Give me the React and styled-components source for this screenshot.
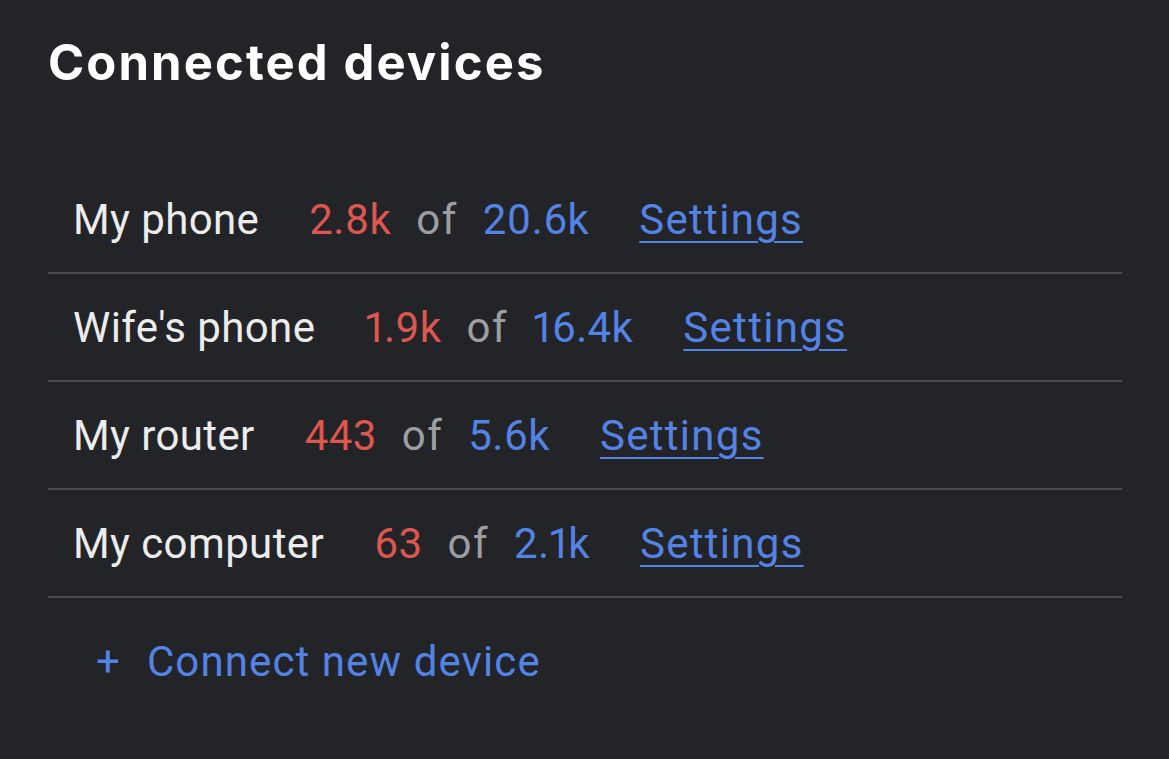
import React from 'react';
import styled, { createGlobalStyle } from 'styled-components';

const Global = createGlobalStyle`
  html, body {
    margin: 0;
    background: #232428;
  }
  body {
    font-family: Roboto, "Noto Sans", sans-serif;
  }
`;

const Panel = styled.div`
  width: 1169px;
  height: 759px;
  box-sizing: border-box;
  padding: 28px 47px 0 48px;
  background: #232428;
`;

const Title = styled.h1`
  margin: 0;
  font-family: Inter, Roboto, sans-serif;
  font-weight: 700;
  font-size: 49px;
  line-height: 70px;
  color: #ffffff;
  letter-spacing: 2.1px;
`;

const List = styled.ul`
  list-style: none;
  margin: 68px 0 0;
  padding: 0;
`;

const Row = styled.li`
  display: flex;
  align-items: center;
  height: 106px;
  padding-left: 25px;
  border-bottom: 2px solid #4a4b4f;
  font-size: 42px;
  letter-spacing: 0.4px;
  font-variant-numeric: proportional-nums;
`;

const Name = styled.span`
  color: #ececed;
  margin-right: 50px;
`;

const Count = styled.span`
  color: ${p => (p.used ? '#dd5650' : '#5383e4')};
`;

const Of = styled.span`
  color: #9d9ea1;
  margin: 0 25px;
  letter-spacing: 1.5px;
`;

const SettingsLink = styled.a`
  color: #5383e4;
  margin-left: 50px;
  letter-spacing: 1.3px;
  text-decoration: underline;
  text-underline-offset: 7px;
  text-decoration-thickness: 2px;
  cursor: pointer;
`;

const AddButton = styled.button`
  display: flex;
  align-items: center;
  gap: 26px;
  margin-top: 20px;
  padding: 0 0 0 48px;
  height: 86px;
  border: none;
  background: none;
  color: #5383e4;
  font-family: Roboto, sans-serif;
  font-size: 42px;
  letter-spacing: 1.1px;
  cursor: pointer;
`;

const devices = [
  { name: 'My phone', used: '2.8k', total: '20.6k' },
  { name: "Wife's phone", used: '1.9k', total: '16.4k' },
  { name: 'My router', used: '443', total: '5.6k' },
  { name: 'My computer', used: '63', total: '2.1k' },
];

export default function App() {
  return (
    <Panel>
      <Global />
      <Title>Connected devices</Title>
      <List>
        {devices.map(d => (
          <Row key={d.name}>
            <Name>{d.name}</Name>
            <Count used>{d.used}</Count>
            <Of>of</Of>
            <Count>{d.total}</Count>
            <SettingsLink>Settings</SettingsLink>
          </Row>
        ))}
      </List>
      <AddButton>
        <span>+</span>
        <span>Connect new device</span>
      </AddButton>
    </Panel>
  );
}
